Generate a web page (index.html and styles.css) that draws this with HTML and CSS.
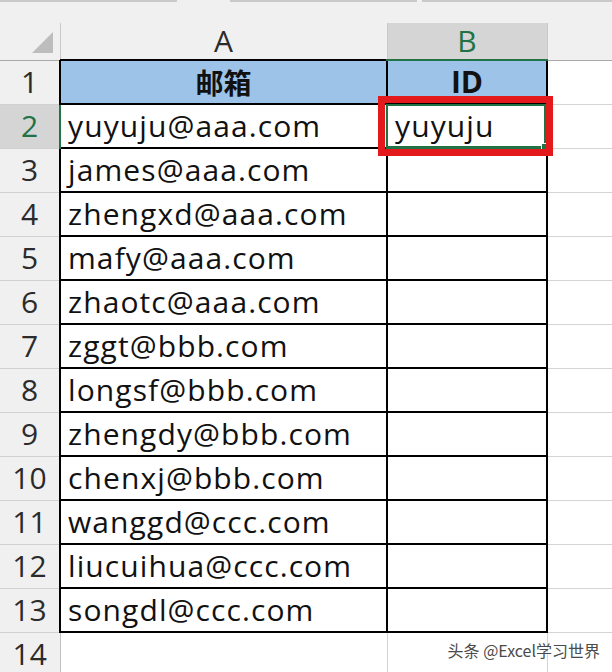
FILE: index.html
```html
<!DOCTYPE html>
<html lang="zh-CN">
<head>
<meta charset="utf-8">
<title>邮箱 ID</title>
<link rel="stylesheet" href="styles.css">
</head>
<body>
<div class="frame">
  <div class="topbar">
    <span class="seg seg-1"></span>
    <span class="gap gap-1"></span>
    <span class="seg seg-2"></span>
    <span class="gap gap-2"></span>
    <span class="seg seg-3"></span>
  </div>
  <table class="sheet">
    <colgroup>
      <col class="c-rh">
      <col class="c-a">
      <col class="c-b">
      <col class="c-c">
    </colgroup>
    <tr class="colhead">
      <th class="corner"><span class="tri"></span></th>
      <th class="ch">A</th>
      <th class="ch ch-sel">B</th>
      <th class="ch ch-c"></th>
    </tr>
    <tr>
      <th class="rh">1</th>
      <td class="d hdr cjk">邮箱</td>
      <td class="d hdr">ID</td>
      <td class="e"></td>
    </tr>
    <tr>
      <th class="rh rh-sel">2</th>
      <td class="d">yuyuju@aaa.com</td>
      <td class="d sel">yuyuju<span class="selbox"><span class="handle"></span></span><span class="redbox"></span></td>
      <td class="e"></td>
    </tr>
    <tr><th class="rh">3</th><td class="d">james@aaa.com</td><td class="d"></td><td class="e"></td></tr>
    <tr><th class="rh">4</th><td class="d">zhengxd@aaa.com</td><td class="d"></td><td class="e"></td></tr>
    <tr><th class="rh">5</th><td class="d">mafy@aaa.com</td><td class="d"></td><td class="e"></td></tr>
    <tr><th class="rh">6</th><td class="d">zhaotc@aaa.com</td><td class="d"></td><td class="e"></td></tr>
    <tr><th class="rh">7</th><td class="d">zggt@bbb.com</td><td class="d"></td><td class="e"></td></tr>
    <tr><th class="rh">8</th><td class="d">longsf@bbb.com</td><td class="d"></td><td class="e"></td></tr>
    <tr><th class="rh">9</th><td class="d">zhengdy@bbb.com</td><td class="d"></td><td class="e"></td></tr>
    <tr><th class="rh">10</th><td class="d">chenxj@bbb.com</td><td class="d"></td><td class="e"></td></tr>
    <tr><th class="rh">11</th><td class="d">wanggd@ccc.com</td><td class="d"></td><td class="e"></td></tr>
    <tr><th class="rh">12</th><td class="d">liucuihua@ccc.com</td><td class="d"></td><td class="e"></td></tr>
    <tr><th class="rh">13</th><td class="d">songdl@ccc.com</td><td class="d"></td><td class="e"></td></tr>
    <tr><th class="rh">14</th><td class="e"></td><td class="e"></td><td class="e"></td></tr>
  </table>
  <div class="watermark">头条 @Excel学习世界</div>
</div>
</body>
</html>
```
FILE: styles.css
```css
html, body {
  margin: 0;
  padding: 0;
  background: #ffffff;
}
.frame {
  position: relative;
  width: 612px;
  height: 672px;
  overflow: hidden;
  background: #ffffff;
  font-family: "Open Sans", "Noto Sans CJK SC", sans-serif;
}
.topbar {
  display: flex;
  height: 23px;
  background: #f0f0f0;
}
.seg {
  height: 2px;
  background: #c9c9c9;
}
.seg-1 { width: 177px; }
.gap-1 { width: 53px; }
.seg-2 { width: 187px; }
.gap-2 { width: 5px; }
.seg-3 { flex: 1; }

.sheet {
  border-collapse: collapse;
  table-layout: fixed;
  width: 612px;
  margin: 0;
}
.c-rh { width: 60px; }
.c-a { width: 327px; }
.c-b { width: 160px; }
.c-c { width: 65px; }

.sheet tr {
  height: 44px;
}
.sheet th, .sheet td {
  padding: 0;
  line-height: 40px;
  font-size: 30px;
  white-space: nowrap;
  overflow: visible;
}

/* column header row */
.sheet tr.colhead {
  height: 37px;
}
.colhead th {
  line-height: 34px;
  background: #f0f0f0;
  font-weight: normal;
  color: #2b2b2b;
  border-right: 1px solid #c9c9c9;
  border-bottom: 1px solid #a9a9a9;
  text-align: center;
}
.corner {
  position: relative;
}
.tri {
  position: absolute;
  left: 32px;
  top: 9px;
  width: 0;
  height: 0;
  border-left: 21px solid transparent;
  border-bottom: 21px solid #bdbdbd;
}
.ch-sel {
  background: #d5d5d5 !important;
  color: #217346 !important;
  border-bottom: 2px solid #217346 !important;
  border-right: 1px solid #bdbdbd;
}
.ch-c {
  background: #f0f0f0;
}

/* row headers */
.rh {
  background: #f0f0f0;
  color: #2b2b2b;
  font-weight: normal;
  text-align: center;
  border-right: 1px solid #c2c2c2;
  border-bottom: 1px solid #d0d0d0;
}
.rh-sel {
  background: #d5d5d5;
  color: #217346;
  border-right: 2px solid #217346;
}

/* data cells */
.d {
  border: 2px solid #000000;
  padding-left: 7px !important;
  color: #111111;
  text-align: left;
  letter-spacing: 1.1px;
}
.hdr {
  background: #9dc3e8;
  text-align: center;
  font-weight: bold;
  padding-left: 0 !important;
  letter-spacing: 0;
}
.cjk {
  font-family: "Noto Sans CJK SC", sans-serif;
  font-size: 28px !important;
}
.e {
  border-right: 1px solid #d4d4d4;
  border-bottom: 1px solid #d4d4d4;
}

.sel {
  position: relative;
}
.selbox {
  position: absolute;
  left: -2px;
  top: -1px;
  right: 0;
  bottom: -2px;
  border: 2px solid #217346;
  border-bottom-width: 3px;
}
.handle {
  position: absolute;
  right: -4px;
  bottom: -5px;
  width: 6px;
  height: 7px;
  background: #217346;
  border-left: 1px solid #ffffff;
  border-top: 1px solid #ffffff;
}
.redbox {
  position: absolute;
  left: -10px;
  top: -9px;
  right: -7px;
  bottom: -9px;
  border: 7px solid #e3191c;
}

.watermark {
  position: absolute;
  right: 12px;
  bottom: 13px;
  font-family: "Noto Sans CJK SC", sans-serif;
  font-size: 16px;
  line-height: 18px;
  color: #4a4a4a;
  text-shadow: 0 0 2px #ffffff, 0 0 2px #ffffff;
}
```
